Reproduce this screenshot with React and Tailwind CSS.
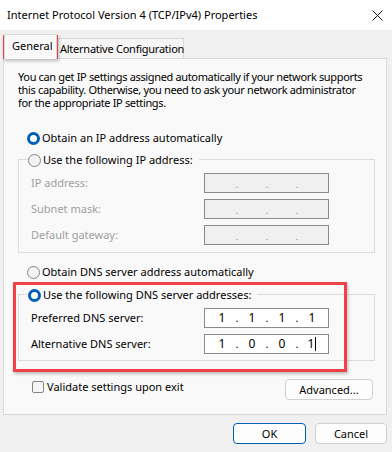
import React from 'react';

function Radio({ checked }) {
  return checked ? (
    <span className="w-[13px] h-[13px] rounded-full border-[3.5px] border-[#005fb8] bg-white shrink-0" />
  ) : (
    <span className="w-[13px] h-[13px] rounded-full border border-[#858585] bg-[#f3f3f3] shrink-0" />
  );
}

function IpBox({ values, disabled, cursor }) {
  const cells = values || ['', '', '', ''];
  return (
    <div className={`w-[125px] h-[20px] border border-[#8a8a8a] flex items-center pl-[6px] ${disabled ? 'bg-[#f0f0f0]' : 'bg-white'}`}>
      {cells.map((v, i) => (
        <React.Fragment key={i}>
          <span className="w-[22px] h-[14px] flex items-center justify-center text-[12px] text-black">
            {v}
            {cursor && i === 3 && <span className="w-px h-[14px] bg-black ml-px" />}
          </span>
          {i < 3 && (
            <span className={`w-[8px] h-[14px] flex items-center justify-center ${disabled ? 'text-[#7a7a7a] text-[9px] pt-[3px]' : 'text-black'}`}>.</span>
          )}
        </React.Fragment>
      ))}
    </div>
  );
}

function Row({ label, disabled, values, cursor }) {
  return (
    <div className="h-[20px] flex items-center justify-between">
      <span className={disabled ? 'text-[#a0a0a0]' : 'text-black'}>{label}</span>
      <IpBox values={values} disabled={disabled} cursor={cursor} />
    </div>
  );
}

export default function App() {
  return (
    <div
      className="relative w-[392px] h-[452px] bg-[#f0f0f0] overflow-hidden text-[11px] leading-[16px] text-black whitespace-nowrap"
      style={{ fontFamily: '"Noto Sans", "Liberation Sans", sans-serif' }}
    >
      {/* Title bar */}
      <div className="h-[30px] bg-white flex items-center justify-between pl-[7px] pr-[8px]">
        <span className="text-[11px]">Internet Protocol Version 4 (TCP/IPv4) Properties</span>
        <svg width="11" height="11" viewBox="0 0 11 11" className="mr-[1px]">
          <path d="M0.5 0.5 L10.5 10.5 M10.5 0.5 L0.5 10.5" stroke="#1a1a1a" strokeWidth="1" />
        </svg>
      </div>

      {/* Tabs */}
      <div className="h-[28px] flex items-end pl-[4px]">
        <div className="h-[25px] w-[53px] bg-[#f9f9f9] border border-b-0 border-[#d9d9d9] pl-[7px] pt-[3px] -mb-px relative z-10">
          General
        </div>
        <div className="h-[20px] w-[127px] bg-[#f5f5f5] border border-l-0 border-b-0 border-[#d9d9d9] pl-[3px] pt-[2px] tracking-[-0.25px]">
          Alternative Configuration
        </div>
      </div>

      {/* Panel */}
      <div className="mx-[3px] w-[384px] h-[357px] border border-[#d9d9d9] bg-[#f9f9f9]">
        <div className="pl-[14px] pt-[11px] leading-[13px] tracking-[-0.35px]">
          You can get IP settings assigned automatically if your network supports
          <br />
          this capability. Otherwise, you need to ask your network administrator
          <br />
          for the appropriate IP settings.
        </div>

        <div className="mt-[21px] ml-[23px] h-[16px] flex items-center gap-[2px]">
          <Radio checked />
          <span>Obtain an IP address automatically</span>
        </div>

        {/* IP group */}
        <div className="mt-[13px] ml-[14px] w-[357px] border border-[#dcdcdc] pl-[12px] pr-[45px] pb-[7px]">
          <div className="-mt-[8px] -ml-[3px] h-[16px] w-fit flex items-center gap-[2px] bg-[#f9f9f9] pr-[6px]">
            <Radio />
            <span>Use the following IP address:</span>
          </div>
          <div className="mt-[5px] flex flex-col gap-[6px]">
            <Row label="IP address:" disabled />
            <Row label="Subnet mask:" disabled />
            <Row label="Default gateway:" disabled />
          </div>
        </div>

        <div className="mt-[11px] ml-[23px] h-[16px] flex items-center gap-[2px]">
          <Radio />
          <span>Obtain DNS server address automatically</span>
        </div>

        {/* DNS group */}
        <div className="mt-[14px] ml-[14px] w-[357px] border border-[#dcdcdc] pl-[12px] pr-[45px] pb-[6px]">
          <div className="-mt-[8px] -ml-[3px] h-[16px] w-fit flex items-center gap-[2px] bg-[#f9f9f9] pr-[6px]">
            <Radio checked />
            <span>Use the following DNS server addresses:</span>
          </div>
          <div className="mt-[5px] flex flex-col gap-[6px]">
            <Row label="Preferred DNS server:" values={['1', '1', '1', '1']} />
            <Row label="Alternative DNS server:" values={['1', '0', '0', '1']} cursor />
          </div>
        </div>

        <div className="mt-[18px] pl-[28px] pr-[13px] flex items-start justify-between">
          <label className="flex items-center gap-[3px] mt-[1px] h-[14px]">
            <span className="w-[12px] h-[12px] rounded-[2px] border border-[#858585] bg-[#f6f6f6]" />
            <span>Validate settings upon exit</span>
          </label>
          <button className="w-[88px] h-[21px] rounded-[4px] border border-[#d0d0d0] bg-[#fdfdfd] text-[11px] leading-[16px]">
            Advanced...
          </button>
        </div>
      </div>

      {/* Bottom buttons */}
      <div className="mt-[8px] pr-[5px] flex justify-end gap-[9px]">
        <button className="w-[73px] h-[21px] rounded-[4px] border border-[#005fb8] bg-[#fdfdfd] text-[11px] leading-[16px]">OK</button>
        <button className="w-[72px] h-[21px] rounded-[4px] border border-[#d0d0d0] bg-[#fdfdfd] text-[11px] leading-[16px]">Cancel</button>
      </div>

      {/* Red highlight overlays */}
      <div className="absolute left-[3px] top-[35px] w-[55px] h-[24px] border-[3px] border-[#ee4148] shadow-[1px_2px_3px_rgba(0,0,0,0.25)]" />
      <div className="absolute left-[13px] top-[282px] w-[334px] h-[90px] border-[3px] border-[#ee4148] shadow-[1px_2px_3px_rgba(0,0,0,0.25)]" />
    </div>
  );
}
